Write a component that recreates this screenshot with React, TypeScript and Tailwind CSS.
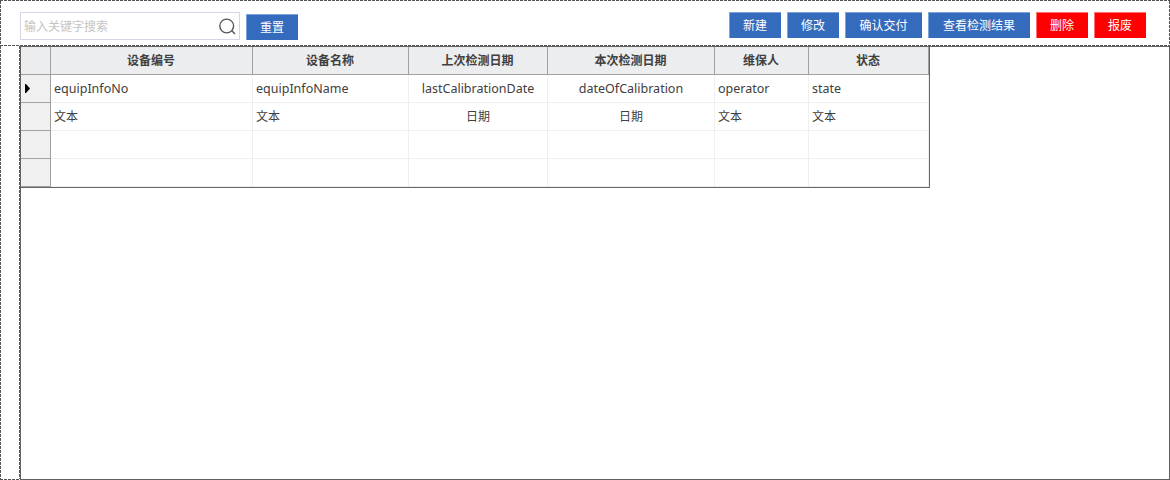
const columns = [
  { title: '设备编号', field: 'equipInfoNo', type: '文本', center: false },
  { title: '设备名称', field: 'equipInfoName', type: '文本', center: false },
  { title: '上次检测日期', field: 'lastCalibrationDate', type: '日期', center: true },
  { title: '本次检测日期', field: 'dateOfCalibration', type: '日期', center: true },
  { title: '维保人', field: 'operator', type: '文本', center: false },
  { title: '状态', field: 'state', type: '文本', center: false },
];

const actions = [
  { label: '新建', width: 'w-[52px]', danger: false },
  { label: '修改', width: 'w-[52px]', danger: false },
  { label: '确认交付', width: 'w-[77px]', danger: false },
  { label: '查看检测结果', width: 'w-[102px]', danger: false },
  { label: '删除', width: 'w-[52px]', danger: true },
  { label: '报废', width: 'w-[52px]', danger: true },
];

const gridCols = 'grid grid-cols-[30px_202px_156px_139px_167px_94px_120px]';
const dashX = 'h-px shrink-0 bg-[repeating-linear-gradient(90deg,#555_0_3px,#fff_3px_4px)]';
const dashY = 'w-px shrink-0 bg-[repeating-linear-gradient(180deg,#555_0_3px,#fff_3px_4px)]';

function Button({ label, width, danger }: { label: string; width: string; danger: boolean }) {
  return (
    <button
      className={`flex h-[26px] items-center justify-center border-t border-l pr-px pt-px text-white ${width} ${
        danger ? 'border-[#ff7070] bg-[#ff0000]' : 'border-[#7da4d8] bg-[#346bbd]'
      }`}
    >
      {label}
    </button>
  );
}

function Toolbar() {
  return (
    <div className="flex h-[46px] flex-col">
      <div className={dashX} />
      <div className="flex min-h-0 flex-1">
        <div className={dashY} />
        <div className="flex flex-1 items-start justify-between pl-[19px] pr-[23px]">
          <div className="flex">
            <div className="mt-[11px] flex h-7 w-[220px] items-center justify-between border border-[#d5d5ea] pl-[3px] pr-[3px] text-[#c4c4c4]">
              <span className="pt-0.5">输入关键字搜索</span>
              <svg width="17" height="17" viewBox="0 0 17 17" fill="none" stroke="#555" strokeWidth="1.4">
                <circle cx="7.7" cy="8" r="6.9" />
                <path d="M12.8 12.8l3.2 3.2" />
              </svg>
            </div>
            <div className="ml-1.5 mt-[13px]">
              <Button label="重置" width="w-[52px]" danger={false} />
            </div>
          </div>
          <div className="mt-[11px] flex gap-1.5">
            {actions.map((a) => (
              <Button key={a.label} {...a} />
            ))}
          </div>
        </div>
        <div className={dashY} />
      </div>
      <div className={dashX} />
    </div>
  );
}

function DataTable() {
  return (
    <div className="w-[909px] border-b border-r border-[#666]">
      <div className={`${gridCols} h-7 bg-[#ecedef] font-bold`}>
        <div className="border-b border-r border-[#a0a0a0]" />
        {columns.map((c) => (
          <div key={c.field} className="flex items-center justify-center border-b border-r border-[#a0a0a0] pr-px pt-px">
            {c.title}
          </div>
        ))}
      </div>
      {[0, 1, 2, 3].map((row) => (
        <div key={row} className={`${gridCols} h-7`}>
          <div className="flex items-center border-b border-r border-[#a0a0a0] bg-[#f0f0f0] pl-1">
            {row === 0 && (
              <svg width="5" height="9" viewBox="0 0 5 9">
                <path d="M0 0h1l4 4.5L1 9H0z" fill="#000" />
              </svg>
            )}
          </div>
          {columns.map((c) => (
            <div
              key={c.field}
              className={`flex items-center border-b border-r border-[#efefef] ${c.center ? 'justify-center' : 'pl-[3px]'}`}
            >
              {row === 0 && <span className="pt-0.5 text-[12.5px]">{c.field}</span>}
              {row === 1 && c.type}
            </div>
          ))}
        </div>
      ))}
    </div>
  );
}

export default function App() {
  return (
    <div className="flex h-[480px] w-[1170px] flex-col overflow-hidden bg-white font-['Noto_Sans','Noto_Sans_CJK_SC',sans-serif] text-xs text-[#404040]">
      <Toolbar />
      <div className="flex min-h-0 flex-1">
        <div className="flex w-5 flex-col">
          <div className="flex min-h-0 flex-1 justify-between">
            <div className={dashY} />
            <div className={dashY} />
          </div>
          <div className={dashX} />
        </div>
        <div className="flex-1 border border-[#606060]">
          <DataTable />
        </div>
      </div>
    </div>
  );
}
